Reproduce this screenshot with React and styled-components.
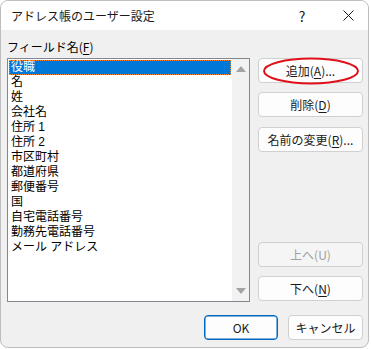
import React, { useState } from "react";
import styled, { createGlobalStyle } from "styled-components";

const GlobalStyle = createGlobalStyle`
  body {
    margin: 0;
    background: #ffffff;
    font-family: "Noto Sans CJK JP", "Noto Sans", sans-serif;
  }
`;

const Window = styled.div`
  width: 369px;
  height: 348px;
  box-sizing: border-box;
  border: 1px solid #bdbdbd;
  border-radius: 8px;
  overflow: hidden;
  background: #f0f0f0;
  display: flex;
  flex-direction: column;
`;

const TitleBar = styled.div`
  height: 29px;
  background: #ffffff;
  display: flex;
  align-items: center;
  padding-left: 10px;
  font-size: 12px;
  color: #1a1a1a;
`;

const Title = styled.div`
  flex: 1;
  line-height: 16px;
`;

const TitleButton = styled.div`
  width: ${(p) => p.$w}px;
  height: 29px;
  display: flex;
  align-items: center;
  justify-content: center;
  font-size: 14px;
  color: #1a1a1a;
`;

const Body = styled.div`
  flex: 1;
  display: flex;
  flex-direction: column;
  padding: 9px 5px 0 6px;
`;

const Main = styled.div`
  display: flex;
`;

const LeftCol = styled.div`
  width: 243px;
  display: flex;
  flex-direction: column;
`;

const Label = styled.div`
  font-size: 12px;
  line-height: 16px;
  color: #000;
  margin-bottom: 3px;
`;

const Listbox = styled.div`
  height: 244px;
  box-sizing: border-box;
  border: 1px solid #828790;
  background: #fff;
  display: flex;
`;

const Items = styled.div`
  flex: 1;
  padding: 1px;
`;

const Item = styled.div`
  height: 15px;
  line-height: 15px;
  font-family: "Liberation Sans", "Noto Sans CJK JP", sans-serif;
  font-size: 12px;
  padding-left: 2px;
  box-sizing: border-box;
  overflow: hidden;
  white-space: pre;
  color: ${(p) => (p.$selected ? "#fff" : "#000")};
  background: ${(p) => (p.$selected ? "#0078d7" : "transparent")};
  outline: ${(p) => (p.$selected ? "1px dotted #ff8728" : "none")};
  outline-offset: -1px;
`;

const Scrollbar = styled.div`
  width: 17px;
  background: #f2f2f2;
  display: flex;
  flex-direction: column;
  justify-content: space-between;
  align-items: center;
  padding: 7px 0;
  box-sizing: border-box;
`;

const Arrow = styled.div`
  width: 0;
  height: 0;
  border-left: 5px solid transparent;
  border-right: 5px solid transparent;
  ${(p) =>
    p.$down
      ? "border-top: 6px solid #a3a3a3;"
      : "border-bottom: 6px solid #a3a3a3;"}
`;

const RightCol = styled.div`
  margin-left: 8px;
  padding-top: 19px;
  width: 105px;
  display: flex;
  flex-direction: column;
`;

const Button = styled.button`
  position: relative;
  width: ${(p) => p.$w || 105}px;
  height: 25px;
  box-sizing: border-box;
  border: 1px solid ${(p) => (p.$default ? "#0067c0" : "#d0d0d0")};
  border-radius: 4px;
  background: ${(p) => (p.$disabled ? "#f5f5f5" : "#fdfdfd")};
  color: ${(p) => (p.$disabled ? "#a0a0a0" : "#1a1a1a")};
  font-family: "Noto Sans CJK JP", "Noto Sans", sans-serif;
  font-size: 12px;
  padding: 0;
  display: flex;
  align-items: center;
  justify-content: center;
  margin-bottom: ${(p) => p.$mb || 0}px;
  ${(p) => (p.$default ? "box-shadow: inset 0 0 0 0.5px #0067c0;" : "")}
`;

const Spacer = styled.div`
  flex: 1;
`;

const Ellipse = styled.svg`
  position: absolute;
  left: 3px;
  top: -2px;
  pointer-events: none;
`;

const U = styled.span`
  text-decoration: underline;
  text-underline-offset: 2px;
`;

const Footer = styled.div`
  display: flex;
  justify-content: flex-end;
  gap: 10px;
  margin-top: 13px;
`;

const fields = [
  "役職",
  "名",
  "姓",
  "会社名",
  "住所 1",
  "住所 2",
  "市区町村",
  "都道府県",
  "郵便番号",
  "国",
  "自宅電話番号",
  "勤務先電話番号",
  "メール アドレス",
];

const App = () => {
  const [selected, setSelected] = useState(0);

  return (
    <>
      <GlobalStyle />
      <Window>
        <TitleBar>
          <Title>アドレス帳のユーザー設定</Title>
          <TitleButton $w={52}>?</TitleButton>
          <TitleButton $w={40}>
            <svg width="11" height="11" viewBox="0 0 11 11">
              <path d="M0.5 0.5 L10.5 10.5 M10.5 0.5 L0.5 10.5" stroke="#1a1a1a" strokeWidth="1" />
            </svg>
          </TitleButton>
        </TitleBar>
        <Body>
          <Main>
            <LeftCol>
              <Label>
                フィールド名(<U>F</U>)
              </Label>
              <Listbox>
                <Items>
                  {fields.map((f, i) => (
                    <Item key={f} $selected={i === selected} onClick={() => setSelected(i)}>
                      {f}
                    </Item>
                  ))}
                </Items>
                <Scrollbar>
                  <Arrow />
                  <Arrow $down />
                </Scrollbar>
              </Listbox>
            </LeftCol>
            <RightCol>
              <Button $mb={9}>
                追加(<U>A</U>)...
                <Ellipse width="98" height="28" viewBox="0 0 98 28">
                  <ellipse cx="49" cy="14" rx="47" ry="12.5" fill="none" stroke="#e0101a" strokeWidth="2" />
                </Ellipse>
              </Button>
              <Button $mb={10}>
                削除(<U>D</U>)
              </Button>
              <Button>
                名前の変更(<U>R</U>)...
              </Button>
              <Spacer />
              <Button $disabled $mb={9}>
                上へ(U)
              </Button>
              <Button $mb={1}>
                下へ(<U>N</U>)
              </Button>
            </RightCol>
          </Main>
          <Footer>
            <Button $default $w={74}>
              OK
            </Button>
            <Button $w={75}>キャンセル</Button>
          </Footer>
        </Body>
      </Window>
    </>
  );
};

export default App;
